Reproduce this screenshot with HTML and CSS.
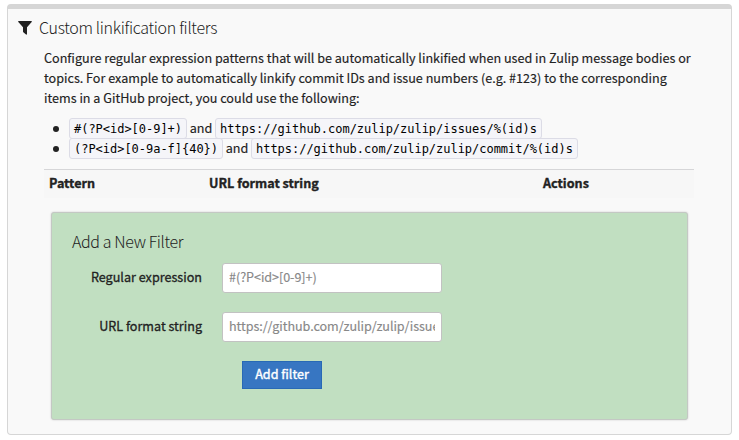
FILE: index.html
```html
<!DOCTYPE html>
<html lang="en">
<head>
<meta charset="utf-8">
<title>Custom linkification filters</title>
<link rel="stylesheet" href="styles.css">
</head>
<body>
<section class="panel">
  <h1 class="panel-title">
    <svg class="filter-icon" viewBox="0 0 14 14" aria-hidden="true"><path d="M.7 0h12.6q.9.3.4 1.1L9 6.2V13q-.2 1-1 .6L5.3 11.3 5 10.800V6.200L.3 1.100Q-.2.3.7 0Z"/></svg>
    <span>Custom linkification filters</span>
  </h1>
  <div class="content">
    <p class="intro">Configure regular expression patterns that will be automatically linkified when used in Zulip message bodies or<br>topics. For example to automatically linkify commit IDs and issue numbers (e.g. #123) to the corresponding<br>items in a GitHub project, you could use the following:</p>
    <ul class="examples">
      <li><code>#(?P&lt;id&gt;[0-9]+)</code><span class="and">and</span><code>https://github.com/zulip/zulip/issues/%(id)s</code></li>
      <li><code>(?P&lt;id&gt;[0-9a-f]{40})</code><span class="and">and</span><code>https://github.com/zulip/zulip/commit/%(id)s</code></li>
    </ul>
    <div class="table-head">
      <span>Pattern</span><span>URL format string</span><span>Actions</span>
    </div>
    <form class="new-filter">
      <h2>Add a New Filter</h2>
      <div class="field"><label for="pattern">Regular expression</label><input id="pattern" type="text" placeholder="#(?P&lt;id&gt;[0-9]+)"></div>
      <div class="field"><label for="format">URL format string</label><input id="format" type="text" placeholder="https://github.com/zulip/zulip/issues/%(id)s"></div>
      <button type="button">Add filter</button>
    </form>
  </div>
</section>
</body>
</html>
```
FILE: styles.css
```css
* { box-sizing: border-box; }
body {
  margin: 0;
  padding: 4px 0 0 7px;
  background: #fff;
  color: #222;
  font-family: "Noto Sans CJK JP", "Open Sans", sans-serif;
  font-size: 12.6px;
  line-height: 20px;
  -webkit-text-stroke: .15px;
}
.panel {
  width: 725px;
  height: 431px;
  border: 1px solid #d6d6d6;
  border-top: 5px solid #d6d6d6;
  border-radius: 4px;
  background: #f9f9f9;
  padding: 8px 37px 0 10px;
}
.panel-title {
  display: flex;
  align-items: center;
  gap: 7px;
  margin: 0;
  height: 20px;
  font-size: 16px;
  font-weight: 300;
  letter-spacing: -.32px;
  -webkit-text-stroke: 0;
}
.filter-icon { width: 14px; height: 14px; fill: #222; position: relative; top: 1px; }
.content { padding-left: 26px; }
.intro { margin: 11px 0 0; white-space: nowrap; }
.examples { margin: 10px 0 0; padding: 0 0 0 25px; list-style: none; }
.examples li { display: flex; align-items: center; height: 20px; position: relative; }
.examples li::before {
  content: "";
  position: absolute;
  left: -16px;
  top: 8px;
  width: 6px;
  height: 6px;
  border-radius: 50%;
  background: #222;
}
code {
  height: 21px;
  flex: none;
  padding: 0 4px;
  border: 1px solid #dcdce6;
  border-radius: 3px;
  background: #f5f5f9;
  color: #000;
  font: 12px/20px "DejaVu Sans Mono", monospace;
  letter-spacing: -.024px;
  white-space: pre;
  -webkit-text-stroke: 0;
}
.and { width: 28px; text-align: center; }
.table-head {
  display: grid;
  grid-template-columns: 160px 334px 1fr;
  margin-top: 11px;
  height: 29px;
  padding: 3px 5px;
  border-top: 1px solid #d6d6d8;
  background: #f7f7f7;
  font-weight: 700;
  -webkit-text-stroke: .35px;
}
.new-filter {
  margin: 14px 6px 0 7px;
  height: 208px;
  padding: 18px 20px 0;
  border: 1px solid #c4c8c4;
  border-radius: 3px;
  background: #c1dfc1;
  box-shadow: 0 0 2px rgba(0, 0, 0, .2);
}
h2 { margin: 0 0 12px; font-size: 16px; line-height: 20px; font-weight: 300; letter-spacing: -.38px; -webkit-text-stroke: 0; }
.field { display: flex; align-items: center; gap: 20px; height: 30px; margin-bottom: 19px; }
label { width: 130px; padding-bottom: 2px; text-align: right; -webkit-text-stroke: .3px; }
input {
  width: 220px;
  height: 30px;
  padding: 2px 6px 6px;
  border: 1px solid #c2c2c2;
  border-radius: 3px;
  background: #fff;
  font: inherit;
  letter-spacing: -.06px;
}
input::placeholder { color: #888; opacity: 1; }
button {
  display: block;
  width: 80px;
  height: 28px;
  margin-left: 170px;
  padding: 0 0 2px;
  border: 1px solid #2869b5;
  background: #3776c2;
  color: #fff;
  font: inherit;
  -webkit-text-stroke: .4px;
}
```
